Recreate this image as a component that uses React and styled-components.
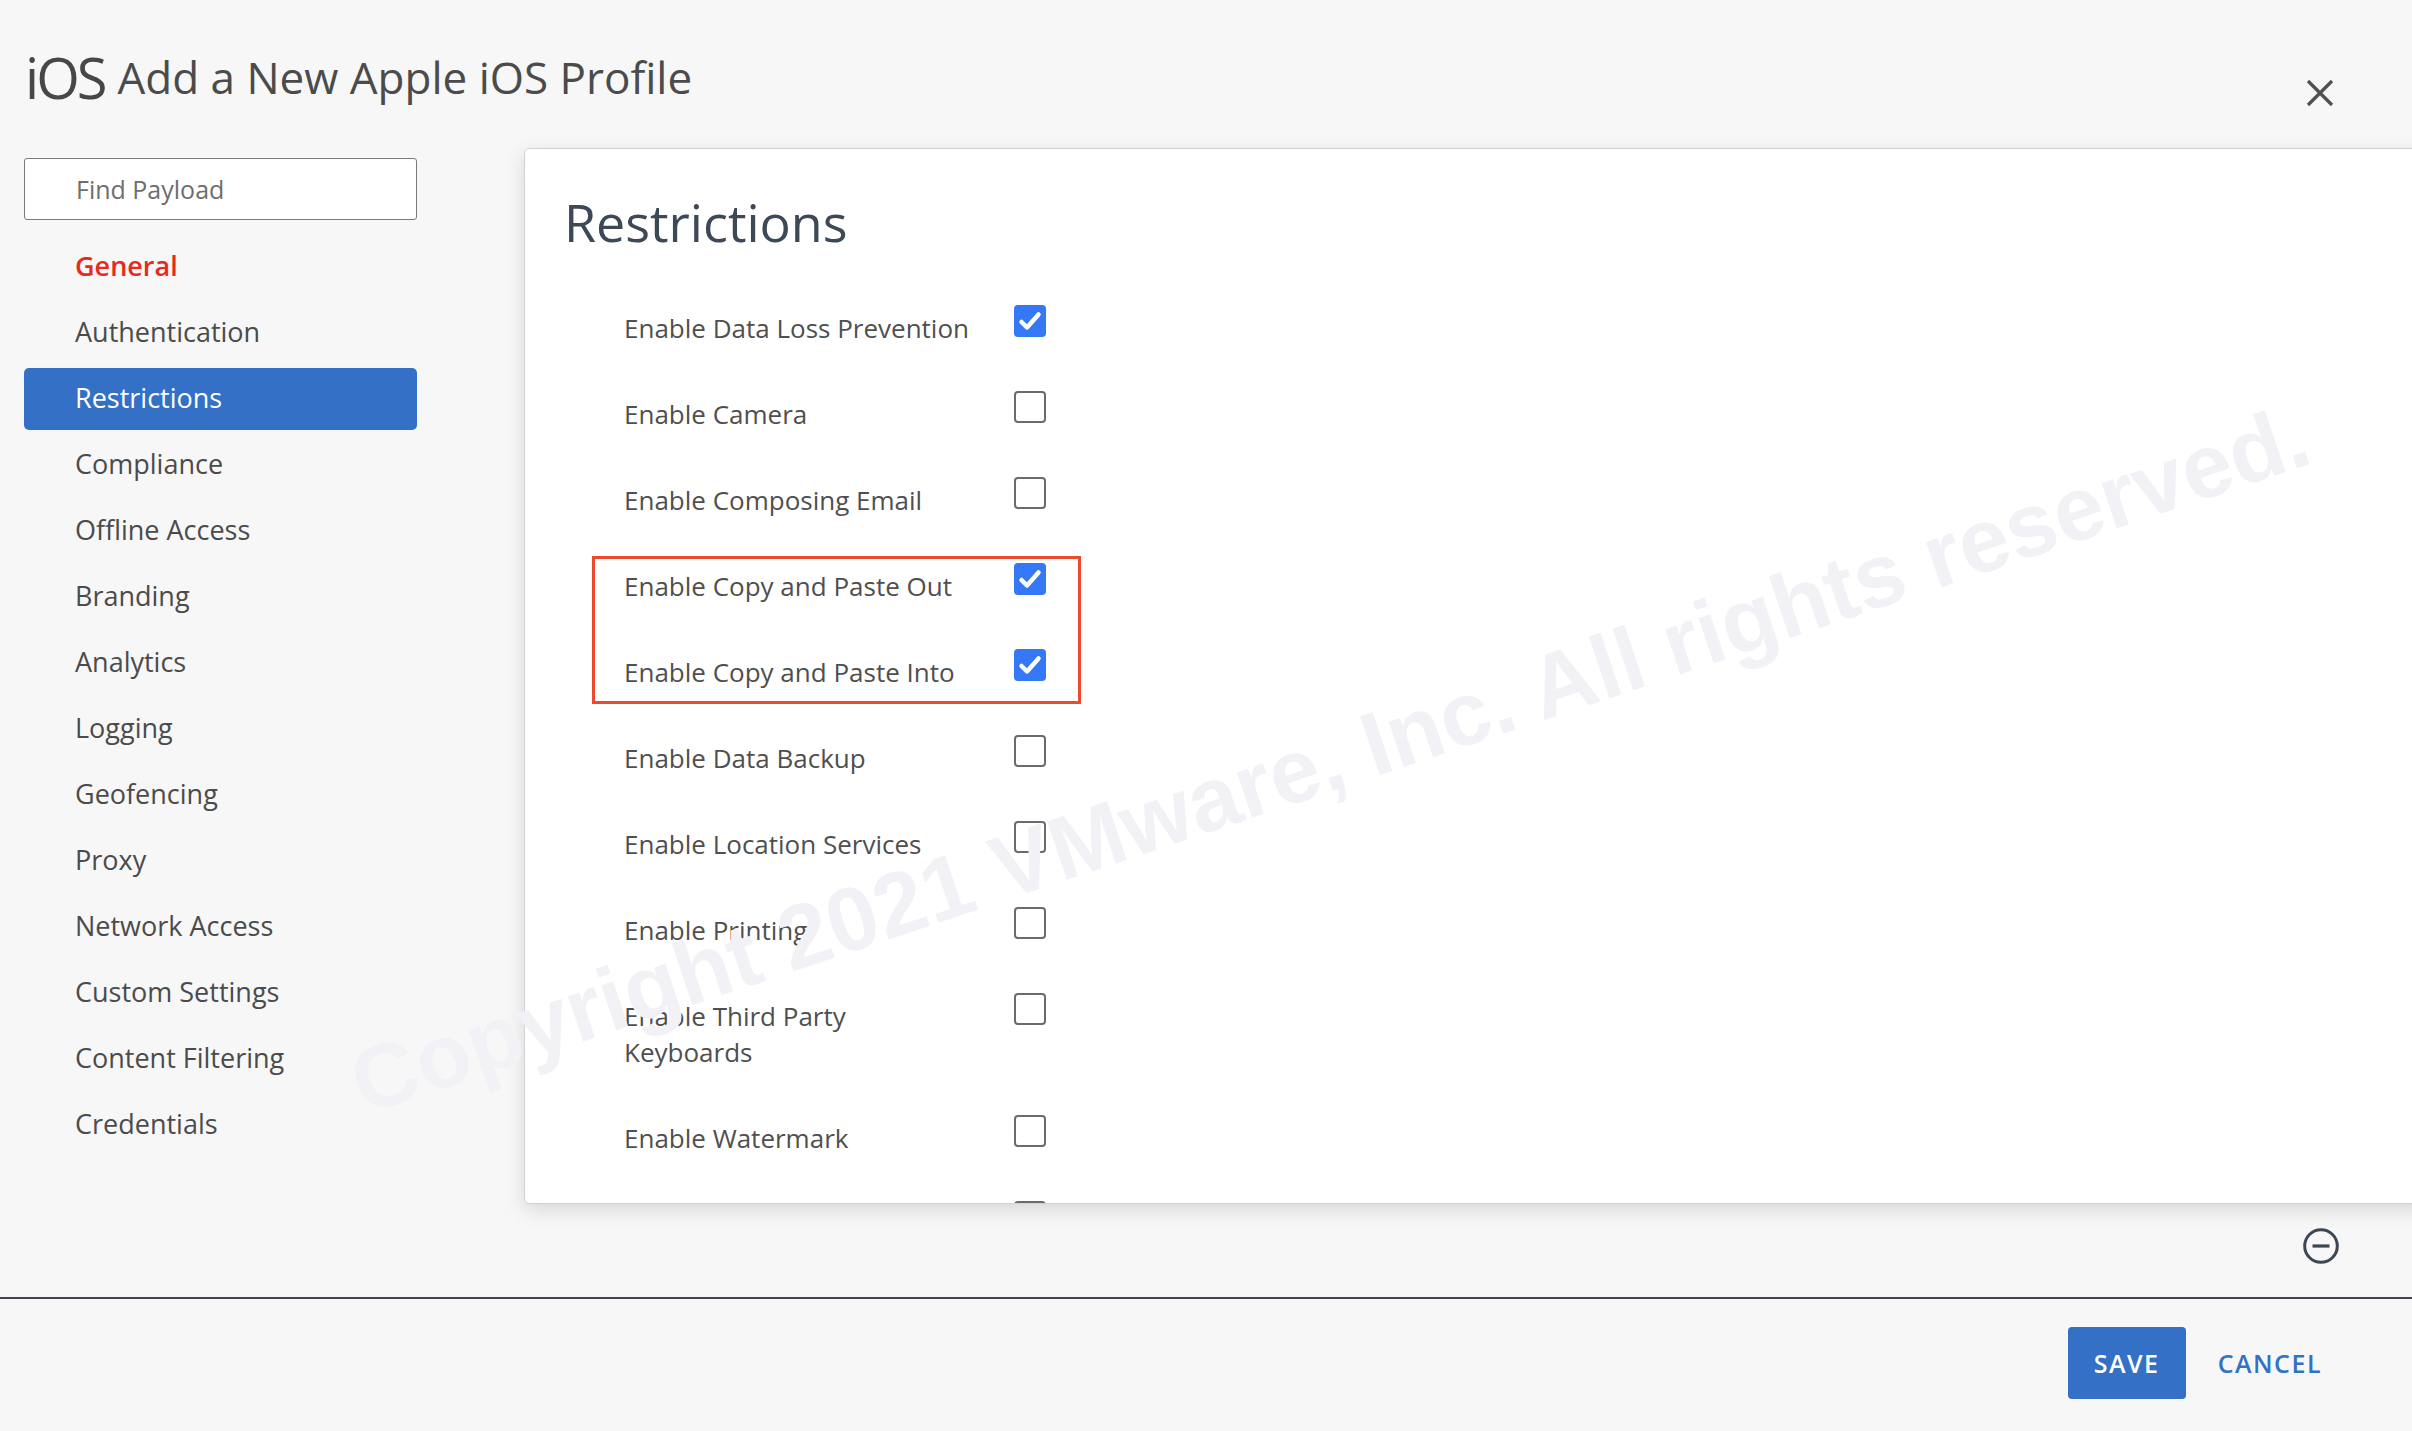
import React from 'react';
import styled, { createGlobalStyle } from 'styled-components';

const GlobalStyle = createGlobalStyle`
  html, body {
    margin: 0;
    padding: 0;
    background: #f7f7f7;
    font-family: 'Open Sans', 'Noto Sans', sans-serif;
    overflow: hidden;
  }
  * {
    box-sizing: border-box;
  }
`;

const Page = styled.div`
  position: relative;
  height: 100vh;
  display: flex;
  flex-direction: column;
  overflow: hidden;
`;

const Header = styled.header`
  display: flex;
  justify-content: space-between;
  align-items: flex-start;
  padding: 49px 78px 0 25px;
`;

const TitleGroup = styled.div`
  display: flex;
  align-items: flex-end;
`;

const Logo = styled.span`
  font-size: 56px;
  font-weight: 400;
  line-height: 56px;
  letter-spacing: -3px;
  color: #474747;
`;

const Title = styled.h1`
  margin: 0 0 0 13px;
  font-size: 44px;
  font-weight: 400;
  line-height: 56px;
  color: #4b4b4b;
`;

const CloseButton = styled.button`
  margin-top: 30px;
  width: 28px;
  height: 28px;
  padding: 0;
  border: none;
  background: none;
  cursor: pointer;
  display: flex;
`;

const Body = styled.div`
  display: flex;
  align-items: flex-start;
  padding-left: 24px;
`;

const Sidebar = styled.nav`
  width: 393px;
  flex: none;
  margin-top: 51px;
`;

const Search = styled.input`
  width: 100%;
  height: 62px;
  border: 1.5px solid #7a7a7a;
  border-radius: 3px;
  background: #fff;
  padding: 0 0 0 51px;
  font-family: inherit;
  font-size: 25px;
  color: #555;
  outline: none;

  &::placeholder {
    color: #6e6e6e;
  }
`;

const NavList = styled.ul`
  list-style: none;
  margin: 16px 0 0;
  padding: 0;
  display: flex;
  flex-direction: column;
  gap: 4px;
`;

const NavItem = styled.li`
  height: 62px;
  line-height: 60px;
  padding-left: 51px;
  border-radius: 5px;
  font-size: 27px;
  font-weight: ${(p) => (p.$accent ? 600 : 400)};
  color: ${(p) => (p.$active ? '#fff' : p.$accent ? '#e8291c' : '#4b4b4b')};
  background: ${(p) => (p.$active ? '#3370c6' : 'transparent')};
`;

const Main = styled.main`
  flex: 1;
  margin: 41px -20px 0 107px;
`;

const Card = styled.section`
  height: 1056px;
  overflow: hidden;
  background: #fff;
  border: 1px solid #d2d2d2;
  border-radius: 5px;
  box-shadow: 0 6px 20px rgba(0, 0, 0, 0.13);
  padding: 42px 0 0 39px;
`;

const Heading = styled.h2`
  margin: 0;
  font-size: 52px;
  font-weight: 400;
  line-height: 1.2;
  color: #3d4956;
`;

const Options = styled.div`
  margin: 52px 0 0 60px;
  display: flex;
  flex-direction: column;
  align-items: flex-start;
`;

const Row = styled.div`
  display: flex;
  align-items: flex-start;
  padding-bottom: 45px;
`;

const Label = styled.span`
  width: 350px;
  margin-top: 5px;
  font-size: 26px;
  line-height: 36px;
  color: #4f4f4f;
`;

const Box = styled.span`
  margin-left: 40px;
  width: 32px;
  height: 32px;
  flex: none;
  border-radius: 4px;
  display: flex;
  align-items: center;
  justify-content: center;
  background: ${(p) => (p.$checked ? '#3478f6' : '#fff')};
  border: ${(p) => (p.$checked ? 'none' : '2px solid #6b6b6b')};
`;

const Highlight = styled.div`
  margin: -7px 0 31px -32px;
  padding: 4px 32px 0 29px;
  border: 3px solid #ec4a2c;
  display: flex;
  flex-direction: column;

  & > ${Row}:last-child {
    padding-bottom: 11px;
  }
`;

const ActionRow = styled.div`
  display: flex;
  justify-content: flex-end;
  padding: 24px 73px 33px 0;
`;

const IconButton = styled.button`
  width: 36px;
  height: 36px;
  padding: 0;
  border: none;
  background: none;
  display: flex;
  cursor: pointer;
`;

const Footer = styled.footer`
  flex: 1;
  border-top: 2px solid #3e4550;
  display: flex;
  justify-content: flex-end;
  align-items: flex-start;
  padding: 28px 90px 0 0;
  gap: 32px;
`;

const FooterButton = styled.button`
  height: 72px;
  padding: ${(p) => (p.$primary ? '0 25px' : '0')};
  min-width: ${(p) => (p.$primary ? '118px' : '0')};
  border: none;
  border-radius: 4px;
  font-family: inherit;
  font-size: 25px;
  font-weight: 600;
  letter-spacing: 1.5px;
  background: ${(p) => (p.$primary ? '#3370c6' : 'transparent')};
  color: ${(p) => (p.$primary ? '#fff' : '#3370c6')};
  cursor: pointer;
`;

const Watermark = styled.div`
  position: absolute;
  left: 364px;
  top: 1039px;
  font-family: 'Liberation Sans', Arial, sans-serif;
  font-weight: 700;
  font-size: 90px;
  line-height: 90px;
  white-space: nowrap;
  color: #f2f1f5;
  transform: rotate(-18.5deg);
  transform-origin: 0 76px;
  pointer-events: none;
  z-index: 5;
`;

const navItems = [
  'General',
  'Authentication',
  'Restrictions',
  'Compliance',
  'Offline Access',
  'Branding',
  'Analytics',
  'Logging',
  'Geofencing',
  'Proxy',
  'Network Access',
  'Custom Settings',
  'Content Filtering',
  'Credentials',
];

const before = [
  { label: 'Enable Data Loss Prevention', checked: true },
  { label: 'Enable Camera', checked: false },
  { label: 'Enable Composing Email', checked: false },
];

const highlighted = [
  { label: 'Enable Copy and Paste Out', checked: true },
  { label: 'Enable Copy and Paste Into', checked: true },
];

const after = [
  { label: 'Enable Data Backup', checked: false },
  { label: 'Enable Location Services', checked: false },
  { label: 'Enable Printing', checked: false },
  { label: 'Enable Third Party Keyboards', checked: false },
  { label: 'Enable Watermark', checked: false },
  { label: 'Enable Screen Capture', checked: false },
];

function Checkbox({ checked }) {
  return (
    <Box $checked={checked}>
      {checked && (
        <svg width="32" height="32" viewBox="0 0 32 32">
          <path
            d="M7.5 17 L13 22.5 L24.5 9.5"
            fill="none"
            stroke="#fff"
            strokeWidth="4.5"
            strokeLinecap="round"
            strokeLinejoin="round"
          />
        </svg>
      )}
    </Box>
  );
}

function Option({ label, checked }) {
  return (
    <Row>
      <Label>{label}</Label>
      <Checkbox checked={checked} />
    </Row>
  );
}

export default function App() {
  return (
    <>
      <GlobalStyle />
      <Page>
        <Header>
          <TitleGroup>
            <Logo>iOS</Logo>
            <Title>Add a New Apple iOS Profile</Title>
          </TitleGroup>
          <CloseButton aria-label="Close">
            <svg width="28" height="28" viewBox="0 0 28 28">
              <path d="M2 2 L26 26 M26 2 L2 26" stroke="#505050" strokeWidth="3.2" />
            </svg>
          </CloseButton>
        </Header>

        <Body>
          <Sidebar>
            <Search placeholder="Find Payload" />
            <NavList>
              {navItems.map((item) => (
                <NavItem
                  key={item}
                  $accent={item === 'General'}
                  $active={item === 'Restrictions'}
                >
                  {item}
                </NavItem>
              ))}
            </NavList>
          </Sidebar>

          <Main>
            <Card>
              <Heading>Restrictions</Heading>
              <Options>
                {before.map((o) => (
                  <Option key={o.label} {...o} />
                ))}
                <Highlight>
                  {highlighted.map((o) => (
                    <Option key={o.label} {...o} />
                  ))}
                </Highlight>
                {after.map((o) => (
                  <Option key={o.label} {...o} />
                ))}
              </Options>
            </Card>
          </Main>
        </Body>

        <ActionRow>
          <IconButton aria-label="Remove payload">
            <svg width="36" height="36" viewBox="0 0 36 36">
              <circle cx="18" cy="18" r="16.3" fill="none" stroke="#3d4752" strokeWidth="3" />
              <path d="M9.5 18 H26.5" stroke="#3d4752" strokeWidth="3.2" />
            </svg>
          </IconButton>
        </ActionRow>

        <Footer>
          <FooterButton $primary>SAVE</FooterButton>
          <FooterButton>CANCEL</FooterButton>
        </Footer>

        <Watermark>Copyright 2021 VMware, Inc. All rights reserved.</Watermark>
      </Page>
    </>
  );
}
